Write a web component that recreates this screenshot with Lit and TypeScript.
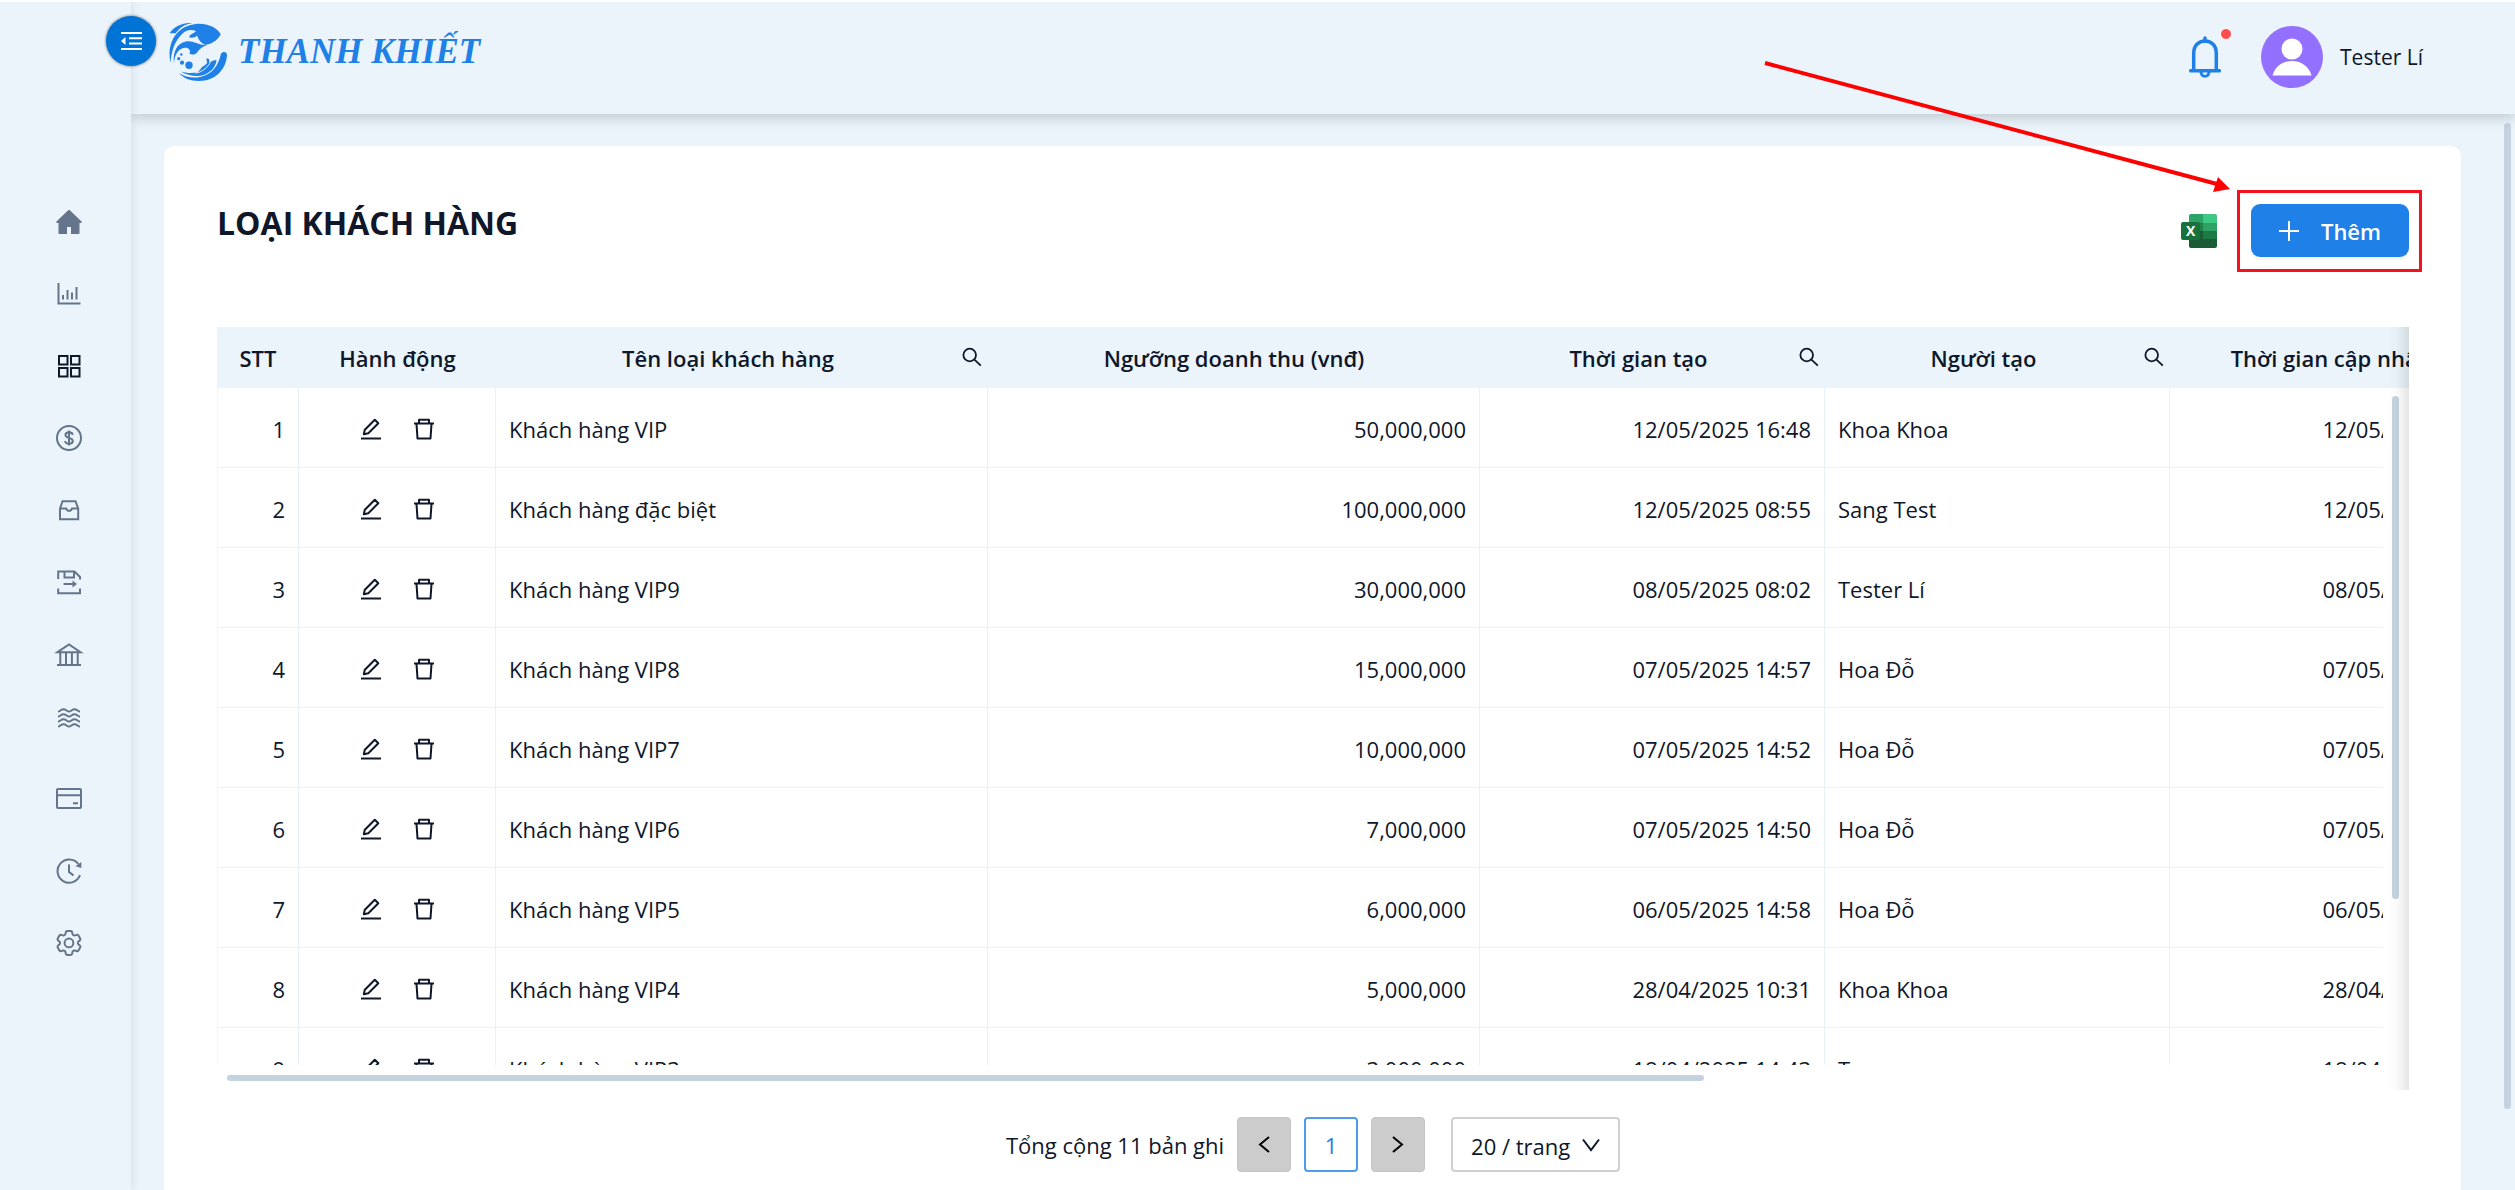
import { LitElement, html, css, svg, nothing } from "lit";
import { customElement } from "lit/decorators.js";
import { classMap } from "lit/directives/class-map.js";

interface Row {
  name: string;
  amount: string;
  created: string;
  author: string;
  updated: string;
}

const ROWS: Row[] = [
  { name: "Khách hàng VIP", amount: "50,000,000", created: "12/05/2025 16:48", author: "Khoa Khoa", updated: "12/05/2025 16:48" },
  { name: "Khách hàng đặc biệt", amount: "100,000,000", created: "12/05/2025 08:55", author: "Sang Test", updated: "12/05/2025 08:55" },
  { name: "Khách hàng VIP9", amount: "30,000,000", created: "08/05/2025 08:02", author: "Tester Lí", updated: "08/05/2025 08:02" },
  { name: "Khách hàng VIP8", amount: "15,000,000", created: "07/05/2025 14:57", author: "Hoa Đỗ", updated: "07/05/2025 14:57" },
  { name: "Khách hàng VIP7", amount: "10,000,000", created: "07/05/2025 14:52", author: "Hoa Đỗ", updated: "07/05/2025 14:52" },
  { name: "Khách hàng VIP6", amount: "7,000,000", created: "07/05/2025 14:50", author: "Hoa Đỗ", updated: "07/05/2025 14:50" },
  { name: "Khách hàng VIP5", amount: "6,000,000", created: "06/05/2025 14:58", author: "Hoa Đỗ", updated: "06/05/2025 14:58" },
  { name: "Khách hàng VIP4", amount: "5,000,000", created: "28/04/2025 10:31", author: "Khoa Khoa", updated: "28/04/2025 10:31" },
  { name: "Khách hàng VIP3", amount: "3,000,000", created: "18/04/2025 14:43", author: "Tuyen", updated: "18/04/2025 14:43" },
];

const COLUMNS = [
  { label: "STT", cls: "w-stt", search: false },
  { label: "Hành động", cls: "w-act", search: false },
  { label: "Tên loại khách hàng", cls: "w-wide", search: true },
  { label: "Ngưỡng doanh thu (vnđ)", cls: "w-wide", search: false },
  { label: "Thời gian tạo", cls: "w-mid", search: true },
  { label: "Người tạo", cls: "w-mid", search: true },
  { label: "Thời gian cập nhật", cls: "w-mid", search: true },
];

const NAV = [
  {
    label: "Trang chủ",
    icon: svg`<path class="solid" d="M14.2 2.2a1.2 1.2 0 0 1 1.6 0L27.3 13.2c.8.8.4 1.8-.7 1.8H25.5V25.2a.8.8 0 0 1-.8.8H17v-7h-4v7H5.300a.8.8 0 0 1-.8-.8V15H3.400c-1.100 0-1.500-1-.7-1.800z"/>`,
  },
  {
    label: "Báo cáo",
    icon: svg`<path d="M4.500 3V23.500H26.500M9 15v4.500M13.500 10v9.500M18 12.500v7M22.500 7v12.500"/>`,
  },
  {
    label: "Danh mục",
    active: true,
    icon: svg`<path d="M5 4h8.500v8.500H5zM17 4h8.500v8.500H17zM5 16h8.500v8.500H5zM17 16h8.500v8.500H17z"/>`,
  },
  {
    label: "Bán hàng",
    icon: svg`<circle cx="15" cy="14" r="12"/><path d="M18.700 10.800c-.3-1.700-1.700-2.500-3.700-2.500s-3.500 1-3.500 2.700c0 1.900 1.600 2.400 3.500 2.900s3.800 1.100 3.800 3.100c0 1.800-1.600 2.800-3.800 2.800-2.300 0-3.700-1-3.900-2.800M15 6.500v15"/>`,
  },
  {
    label: "Kho",
    icon: svg`<path d="M6 12.500 8.600 5.200H21.500L24.200 12.500V23.200H6zM6 12.500h6.200c.4 1.700 1.400 2.300 2.900 2.300s2.500-.6 2.900-2.300h6.200"/>`,
  },
  {
    label: "Xuất nhập",
    icon: svg`<path d="M4.200 11V3.600H20.500L26 9v2.500M10.500 3.600V9.500h9.500V3.600M9.500 16h10M4.200 20.500V25.200H26V20.500"/><path class="solid" d="M18.500 12.500 23 16l-4.500 3.500z"/>`,
  },
  {
    label: "Ngân hàng",
    icon: svg`<path d="M3.500 12.200 15 4.400 26.500 12.200zM6.300 12v12.500M12 12v12.500M17.900 12v12.500M23.700 12v12.500M3 25h24"/>`,
  },
  {
    label: "Sản lượng",
    compact: true,
    icon: svg`${[7.5, 12.5, 17.5, 22.5].map(
      (y) => svg`<path d="M4 ${y}c2 0 3-2.200 5.500-2.200s3.500 2.200 5.500 2.200 3-2.200 5.500-2.200 3.500 2.200 5.500 2.200"/>`
    )}`,
  },
  {
    label: "Thanh toán",
    icon: svg`<rect x="3" y="5" width="24" height="19" rx="1"/><path d="M3 11.200h24M19 19.200h5"/>`,
  },
  {
    label: "Lịch sử",
    icon: svg`<path d="M26 19.200A11.600 11.600 0 1 1 24.300 8M15 8.500V16l4.500 3.400"/><path class="solid" d="M27.300 6v6l-5.800-1.800z"/>`,
  },
  {
    label: "Cài đặt",
    icon: svg`<g transform="translate(-1 -1) scale(1.330)"><path class="gear" d="M9.594 3.940c.09-.542.56-.94 1.110-.94h2.593c.55 0 1.020.398 1.110.94l.213 1.281c.063.374.313.686.645.87.074.04.147.083.22.127.325.196.72.257 1.075.124l1.217-.456a1.125 1.125 0 0 1 1.370.49l1.296 2.247a1.125 1.125 0 0 1-.26 1.431l-1.003.827c-.293.241-.438.613-.43.992a7.723 7.723 0 0 1 0 .255c-.008.378.137.75.43.991l1.004.827c.424.35.534.955.26 1.430l-1.298 2.247a1.125 1.125 0 0 1-1.369.491l-1.217-.456c-.355-.133-.75-.072-1.076.124a6.470 6.470 0 0 1-.22.128c-.331.183-.581.495-.644.869l-.213 1.281c-.09.543-.56.94-1.110.94h-2.594c-.55 0-1.019-.398-1.110-.94l-.213-1.281c-.062-.374-.312-.686-.644-.87a6.520 6.520 0 0 1-.22-.127c-.325-.196-.72-.257-1.076-.124l-1.217.456a1.125 1.125 0 0 1-1.369-.49l-1.297-2.247a1.125 1.125 0 0 1 .26-1.431l1.004-.827c.292-.24.437-.613.43-.991a6.932 6.932 0 0 1 0-.255c.007-.38-.138-.751-.43-.992l-1.004-.827a1.125 1.125 0 0 1-.26-1.430l1.297-2.247a1.125 1.125 0 0 1 1.370-.491l1.216.456c.356.133.751.072 1.076-.124.072-.044.146-.086.22-.128.332-.183.582-.495.644-.869l.214-1.280Z"/><circle class="gear" cx="12" cy="12" r="3.300"/></g>`,
  },
];

const shared = css`
  * {
    box-sizing: border-box;
  }
  button {
    font: inherit;
    color: inherit;
    border: 0;
    padding: 0;
    background: none;
    cursor: pointer;
  }
  svg {
    display: block;
    flex: none;
  }
`;

@customElement("side-nav")
export class SideNav extends LitElement {
  static styles = [
    shared,
    css`
      :host {
        display: block;
        position: relative;
        z-index: 3;
        background: #eaf4fa;
        box-shadow: 2px 0 8px rgba(0, 20, 40, 0.08);
      }
      .toggle {
        position: absolute;
        top: 14px;
        right: -25px;
        width: 50px;
        height: 50px;
        border-radius: 50%;
        background: #0073d6;
        box-shadow: 0 0 3px rgba(0, 0, 0, 0.6);
        display: grid;
        place-items: center;
      }
      .list {
        margin: 0;
        padding: 184px 0 0;
        list-style: none;
      }
      .item {
        height: 72px;
        padding-left: 6px;
      }
      .compact {
        padding-bottom: 16px;
      }
      .link {
        display: grid;
        place-items: center;
        height: 100%;
        color: #64748b;
      }
      .active {
        color: #0f172a;
      }
      .icon {
        fill: none;
        stroke: currentColor;
        stroke-width: 2;
      }
      .icon .solid {
        fill: currentColor;
        stroke: none;
      }
      .icon .gear {
        stroke-width: 1.5;
      }
    `,
  ];

  render() {
    return html`
      <button class="toggle" type="button" aria-label="Thu gọn menu">
        <svg width="22" height="20" viewBox="0 0 22 20" fill="none" stroke="#fff" stroke-width="2">
          <path d="M1 2h21M9 7.200h13M9 12.400h13M1 18h21" />
          <path d="M5.500 6v8L1 10z" fill="#fff" stroke="none" />
        </svg>
      </button>
      <nav>
        <ul class="list">
          ${NAV.map(
            (n) => html`<li class=${classMap({ item: true, compact: !!n.compact })}>
              <a class=${classMap({ link: true, active: !!n.active })} href="#" aria-label=${n.label}>
                <svg class="icon" width="30" height="28" viewBox="0 0 30 28">${n.icon}</svg>
              </a>
            </li>`
          )}
        </ul>
      </nav>
    `;
  }
}

@customElement("top-bar")
export class TopBar extends LitElement {
  static styles = [
    shared,
    css`
      :host {
        display: flex;
        align-items: flex-start;
        justify-content: space-between;
        position: relative;
        z-index: 2;
        height: 112px;
        padding: 20px 92px 0 38px;
        background: #eaf4fa;
        box-shadow: 0 4px 12px rgba(0, 10, 20, 0.18);
      }
      .brand {
        display: flex;
        align-items: center;
        gap: 9px;
        color: #1f80e8;
        text-decoration: none;
      }
      .word {
        font: italic bold 35px/60px "Liberation Serif", serif;
      }
      .tools {
        display: flex;
        align-items: center;
        height: 70px;
      }
      .bell {
        position: relative;
        margin-right: 40px;
      }
      .dot {
        position: absolute;
        top: -8px;
        right: -11px;
        width: 12px;
        height: 12px;
        border-radius: 50%;
        background: #ff4d4f;
        border: 1px solid #fff;
      }
      .user {
        display: flex;
        align-items: center;
        gap: 17px;
        font-size: 21px;
        color: #0f172a;
      }
    `,
  ];

  render() {
    return html`
      <a class="brand" href="#">
        <svg width="60" height="60" viewBox="0 0 60 60" fill="currentColor" aria-hidden="true">
          <path d="M.7 11.300C4 6 12 .3 23 1.200 15.500 2.200 11 5.500 6.700 11.300z" />
          <path d="M1.500 41C-2.500 23 6 4 27 2c11-1 20.500 3.500 24.700 10C49.500 17.500 44 21.500 36.500 23c-4-1.500-7-5-8.500-9.500-1.500 2-5 2.800-8 1.800 1-3 4.500-3.800 7-6C22.500 6.800 17 8 13 12 5.500 19.500 2.500 29 1.500 41z" />
          <path d="M5 41.500C3.500 30 8 21 17 19.500c8-1.300 11.500 4 21 3.500-5 2-7.500 4-10.500 8.300-2 1.500-5 1.700-7 .5C22 28 19.500 25.500 16 25.800 9 26.500 5.500 33 5 41.500z" />
          <circle cx="20" cy="43.300" r="3.700" />
          <circle cx="13" cy="40.700" r="2.100" />
          <circle cx="9.700" cy="36.700" r="1.600" />
          <circle cx="12.300" cy="32.500" r="1.200" />
          <path d="M52 31.500c2-2.500 6-2 6 1.500C57 48 46 59 30 59c-9 0-16-3-20-8 6 4 14 5.500 21 4C43 52.500 49.500 44 52 31.500z" />
          <path d="M47.500 38C47 46 39 53.500 29 54c-6 .2-12-1.500-17.500-4.500 8 2.300 17 2 22-1.500 3-2 4.500-5 7-7.200 2-1.500 4.500-2.800 7-2.800z" />
          <path d="M37 36c4-.5 5 3.500 3 6.500-3 4-7.500 8-13.500 8.500 3.500-1.500 4.500-4 6-6 2-2 3.500-1.500 5-4 .5-2-1-3-.5-5z" stroke="#eaf4fa" stroke-width="1" />
        </svg>
        <span class="word">THANH KHIẾT</span>
      </a>
      <div class="tools">
        <button class="bell" type="button" aria-label="Thông báo">
          <svg width="32" height="42" viewBox="0 0 32 42" fill="none" stroke="#1f80e8" stroke-width="3.500">
            <path d="M4.700 34V17.500C4.700 9.500 9.500 5 16 5s11.300 4.500 11.300 12.500V34" />
            <path d="M1.700 34.700h28.600M16 2v3" stroke-linecap="round" />
            <path d="M12 36c.2 2.700 1.700 4.300 4 4.300s3.800-1.600 4-4.300" stroke-width="3" />
          </svg>
          <span class="dot"></span>
        </button>
        <div class="user">
          <svg width="62" height="62" viewBox="0 0 62 62" role="img" aria-label="Ảnh đại diện">
            <circle cx="31" cy="31" r="31" fill="#9370ff" />
            <circle cx="31" cy="23" r="10.500" fill="#fff" />
            <path d="M11.500 49.500C14 40.500 21.500 35 31 35s17 5.500 19.500 14.500z" fill="#fff" />
          </svg>
          <span>Tester Lí</span>
        </div>
      </div>
    `;
  }
}

@customElement("customer-table")
export class CustomerTable extends LitElement {
  static styles = [
    shared,
    css`
      :host {
        display: block;
        position: relative;
        overflow: hidden;
        font-size: 22px;
        color: #0f172a;
      }
      .head {
        overflow: hidden;
        background: #eaf4fa;
      }
      .table {
        width: 2298px;
        table-layout: fixed;
        border-collapse: separate;
        border-spacing: 0;
      }
      .w-stt { width: 82px; }
      .w-act { width: 197px; }
      .w-wide { width: 492px; }
      .w-mid { width: 345px; }
      .th {
        height: 61px;
        padding: 0 6px;
        font-weight: 600;
        white-space: nowrap;
      }
      .th-row {
        display: flex;
        align-items: center;
        justify-content: center;
      }
      .th-text {
        flex: 1;
        text-align: center;
      }
      .frame {
        display: grid;
        grid-template-columns: minmax(0, 1fr) 26px;
        grid-template-rows: auto 25px;
      }
      .view {
        max-height: calc(100vh - 513px);
        overflow: hidden;
      }
      .td {
        height: 80px;
        padding: 2px 13px 0;
        border-right: 1px solid #e6f2f8;
        border-bottom: 1px solid #e6f2f8;
        white-space: nowrap;
      }
      .td:first-child {
        border-left: 1px solid #eff7fb;
      }
      .right {
        text-align: right;
      }
      .actions {
        display: flex;
        justify-content: center;
        gap: 31px;
      }
      .thumb {
        background: #c5d3e0;
        border-radius: 4px;
      }
      .v {
        width: 7px;
        height: 503px;
        margin: 8px 0 0 9px;
      }
      .h {
        width: calc(68% + 4px);
        height: 6px;
        margin: 10px 0 0 10px;
      }
      .edge {
        position: absolute;
        top: 0;
        right: 0;
        bottom: 0;
        width: 20px;
        background: linear-gradient(to right, rgba(0, 0, 0, 0), rgba(0, 0, 0, 0.02) 40%, rgba(0, 0, 0, 0.1));
        pointer-events: none;
      }
    `,
  ];

  private cols() {
    return html`<colgroup>${COLUMNS.map((c) => html`<col class=${c.cls} />`)}</colgroup>`;
  }

  render() {
    return html`
      <div class="head">
        <table class="table">
          ${this.cols()}
          <thead>
            <tr>
              ${COLUMNS.map(
                (c) => html`<th class="th" scope="col">
                  <div class="th-row">
                    <span class="th-text">${c.label}</span>
                    ${c.search
                      ? html`<button type="button" aria-label="Tìm kiếm ${c.label}">
                          <svg width="28" height="22" viewBox="0 0 28 22" fill="none" stroke="#0f172a" stroke-width="1.800">
                            <circle cx="15.700" cy="8" r="6.300" />
                            <path d="M20.200 12.300 26.800 18.700" />
                          </svg>
                        </button>`
                      : nothing}
                  </div>
                </th>`
              )}
            </tr>
          </thead>
        </table>
      </div>
      <div class="frame">
        <div class="view">
          <table class="table" aria-label="Loại khách hàng">
            ${this.cols()}
            <tbody>
              ${ROWS.map(
                (r, i) => html`<tr>
                  <td class="td right">${i + 1}</td>
                  <td class="td">
                    <div class="actions">
                      <button type="button" aria-label="Sửa ${r.name}">
                        <svg width="22" height="22" viewBox="0 0 22 22" fill="none" stroke="#0f172a" stroke-width="2" stroke-linejoin="round">
                          <path d="M3.800 16.300 4.800 11.800 14.800 1.800 18.300 5.300 8.300 15.200z" />
                          <path d="M1 20.500h20" />
                        </svg>
                      </button>
                      <button type="button" aria-label="Xóa ${r.name}">
                        <svg width="22" height="22" viewBox="0 0 22 22" fill="none" stroke="#0f172a" stroke-width="2" stroke-linejoin="round">
                          <path d="M1 5.500h20M6 5V1.700h10V5M3.500 6 4.500 20.500h13L18.500 6" />
                        </svg>
                      </button>
                    </div>
                  </td>
                  <td class="td">${r.name}</td>
                  <td class="td right">${r.amount}</td>
                  <td class="td right">${r.created}</td>
                  <td class="td">${r.author}</td>
                  <td class="td right">${r.updated}</td>
                </tr>`
              )}
            </tbody>
          </table>
        </div>
        <div class="thumb v"></div>
        <div class="thumb h"></div>
      </div>
      <div class="edge"></div>
    `;
  }
}

@customElement("page-nav")
export class PageNav extends LitElement {
  static styles = [
    shared,
    css`
      :host {
        display: flex;
        align-items: center;
        justify-content: center;
        gap: 13px;
        margin-top: 27px;
        font-size: 22px;
        color: #0f172a;
      }
      .btn {
        display: grid;
        place-items: center;
        width: 54px;
        height: 55px;
        border: 1px solid #c4c4c8;
        border-radius: 4px;
        background: #cccccc;
      }
      .current {
        border: 2px solid #4f9cec;
        background: #fff;
        color: #1f80e8;
      }
      .size {
        display: flex;
        align-items: center;
        position: relative;
        margin-left: 13px;
      }
      .select {
        width: 169px;
        height: 55px;
        padding: 2px 40px 0 18px;
        border: 2px solid #cfd0d4;
        border-radius: 4px;
        background: #fff;
        appearance: none;
        font: inherit;
        color: inherit;
      }
      .caret {
        position: absolute;
        right: 20px;
        pointer-events: none;
      }
    `,
  ];

  render() {
    return html`
      <span>Tổng cộng 11 bản ghi</span>
      <button class="btn" type="button" aria-label="Trang trước">
        <svg width="12" height="17" viewBox="0 0 12 17" fill="none" stroke="#000" stroke-width="2"><path d="M11 1 2 8.500 11 16" /></svg>
      </button>
      <button class="btn current" type="button" aria-current="page">1</button>
      <button class="btn" type="button" aria-label="Trang sau">
        <svg width="12" height="17" viewBox="0 0 12 17" fill="none" stroke="#000" stroke-width="2"><path d="M1 1 10 8.500 1 16" /></svg>
      </button>
      <label class="size">
        <select class="select" aria-label="Số dòng mỗi trang">
          <option>20 / trang</option>
        </select>
        <svg class="caret" width="18" height="14" viewBox="0 0 18 14" fill="none" stroke="#0f172a" stroke-width="2"><path d="M1 1.500 9 12 17 1.500" /></svg>
      </label>
    `;
  }
}

@customElement("app-root")
export class AppRoot extends LitElement {
  static styles = [
    shared,
    css`
      :host {
        display: grid;
        grid-template-columns: 131px minmax(0, 1fr);
        position: relative;
        height: 100vh;
        overflow: hidden;
        border-top: 2px solid #fff;
        box-sizing: border-box;
        background: #eaf4fa;
        color: #0f172a;
        font-family: "Open Sans", "Noto Sans", sans-serif;
      }
      .column {
        display: flex;
        flex-direction: column;
        min-height: 0;
      }
      .main {
        flex: 1;
        position: relative;
        min-height: 0;
        padding: 32px 54px 0 33px;
        overflow: hidden;
      }
      .card {
        min-height: 120%;
        padding: 58px 52px 0 53px;
        border-radius: 10px;
        background: #fff;
      }
      .bar {
        display: flex;
        align-items: center;
        gap: 34px;
        margin-bottom: 70px;
      }
      .title {
        flex: 1;
        align-self: flex-start;
        margin: 0;
        font-size: 32px;
        line-height: 38px;
        font-weight: 700;
      }
      .spot {
        position: relative;
      }
      .spot::after {
        content: "";
        position: absolute;
        inset: -14px -13px -15px -14px;
        border: 3px solid #f5121d;
        pointer-events: none;
      }
      .add {
        display: flex;
        align-items: center;
        justify-content: center;
        gap: 22px;
        width: 158px;
        height: 53px;
        border-radius: 9px;
        background: #1f80e8;
        box-shadow: 0 3px 0 rgba(0, 0, 0, 0.03);
        color: #fff;
        font-size: 22px;
        font-weight: 600;
      }
      .arrow {
        position: absolute;
        z-index: 4;
        top: 58px;
        right: 284px;
        pointer-events: none;
      }
      .scroll {
        position: absolute;
        top: 9px;
        right: 4px;
        bottom: 81px;
        width: 7px;
        border-radius: 4px;
        background: #c5d3e0;
      }
      .mark {
        font: bold 14px "Open Sans", sans-serif;
      }
    `,
  ];

  render() {
    return html`
      <side-nav></side-nav>
      <div class="column">
        <top-bar></top-bar>
        <main class="main">
          <section class="card">
            <div class="bar">
              <h1 class="title">LOẠI KHÁCH HÀNG</h1>
              <button type="button" aria-label="Xuất Excel">
                <svg width="36" height="34" viewBox="0 0 36 34">
                  <path d="M10 0h12v9H8V2a2 2 0 0 1 2-2z" fill="#2da365" />
                  <path d="M22 0h12a2 2 0 0 1 2 2v7H22z" fill="#3fc784" />
                  <path d="M8 9h14v8H8z" fill="#1f8349" />
                  <path d="M22 9h14v8H22z" fill="#2da365" />
                  <path d="M8 17h14v17H10a2 2 0 0 1-2-2z" fill="#1a5c36" />
                  <path d="M22 17h14v8H22z" fill="#1d7a43" />
                  <path d="M22 25h14v7a2 2 0 0 1-2 2H22z" fill="#1a5c36" />
                  <rect y="8" width="19" height="18" rx="2" fill="#17713d" />
                  <text class="mark" x="5" y="22" fill="#fff">X</text>
                </svg>
              </button>
              <div class="spot">
                <button class="add" type="button">
                  <svg width="20" height="20" viewBox="0 0 20 20" stroke="#fff" stroke-width="2"><path d="M10 0v20M0 10h20" /></svg>
                  Thêm
                </button>
              </div>
            </div>
            <customer-table></customer-table>
            <page-nav></page-nav>
          </section>
          <div class="scroll"></div>
        </main>
      </div>
      <svg class="arrow" width="468" height="136" viewBox="0 0 468 136" aria-hidden="true">
        <path d="M2 3 454 124" stroke="#fe0000" stroke-width="4" />
        <path d="M467 129 455 117 450 132z" fill="#fe0000" />
      </svg>
    `;
  }
}
